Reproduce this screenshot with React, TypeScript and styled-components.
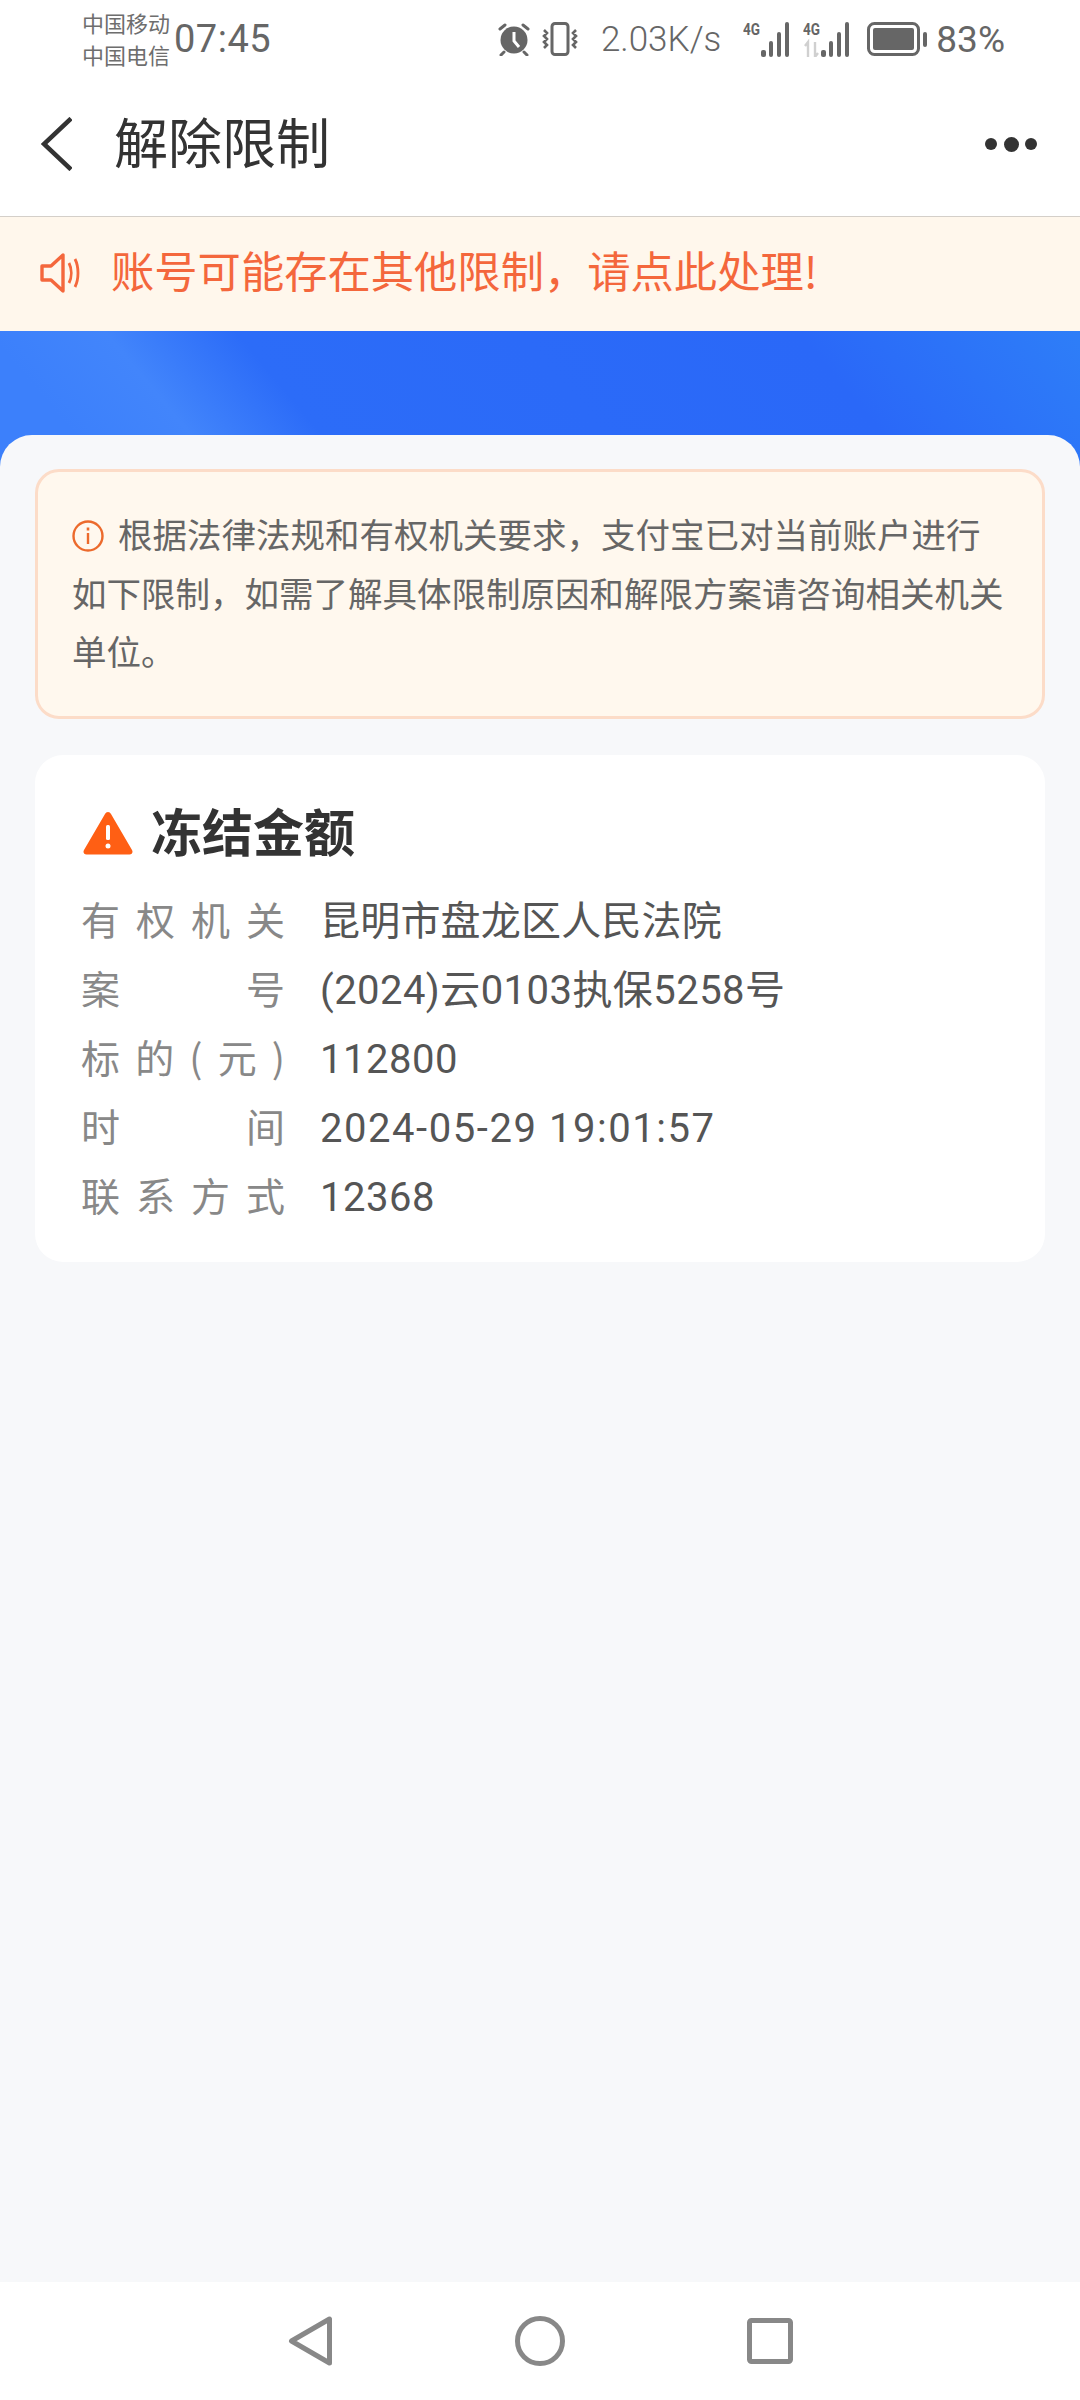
import React from 'react';
import styled, { createGlobalStyle } from 'styled-components';

const CJK = '"Noto Sans CJK SC", "Noto Sans", sans-serif';
const NUM = 'Roboto, "Noto Sans CJK SC", sans-serif';

const GlobalStyle = createGlobalStyle`
  html, body {
    margin: 0;
    padding: 0;
    background: #f7f8fa;
    font-family: ${CJK};
  }
  * {
    box-sizing: border-box;
  }
`;

const Page = styled.div`
  width: 1080px;
  height: 2400px;
  display: flex;
  flex-direction: column;
  overflow: hidden;
`;

const StatusBar = styled.div`
  height: 72px;
  padding: 6px 75px 0 82px;
  display: flex;
  align-items: center;
  background: #fff;
  color: #666;
`;

const Carriers = styled.div`
  width: 92px;
  margin-top: -2px;
  font-size: 22px;
  line-height: 32px;
  color: #6e6e6e;
`;

const Clock = styled.span`
  font-family: ${NUM};
  font-size: 38px;
  letter-spacing: 0.5px;
`;

const StatusRight = styled.div`
  margin-left: auto;
  display: flex;
  align-items: center;
`;

const Speed = styled.span`
  font-family: ${NUM};
  font-weight: 300;
  font-size: 35px;
  margin: 0 22px;
`;

const Percent = styled.span`
  font-family: ${NUM};
  font-weight: 400;
  font-size: 37px;
  margin-left: 9px;
`;

const Header = styled.header`
  height: 145px;
  padding: 0 40px 0 41px;
  display: flex;
  align-items: center;
  background: #fff;
  border-bottom: 1px solid #d4cfc9;
`;

const Title = styled.h1`
  margin: 0 0 6px 42px;
  font-size: 54px;
  font-weight: 400;
  color: #333;
  line-height: 1;
`;

const MoreDots = styled.div`
  margin-left: auto;
  margin-right: 3px;
  display: flex;
  align-items: center;
  gap: 6.5px;
`;

const Dot = styled.span<{ $size: number }>`
  width: ${(p) => p.$size}px;
  height: ${(p) => p.$size}px;
  border-radius: 50%;
  background: #333;
`;

const Notice = styled.div`
  height: 114px;
  padding: 0 0 2px 40px;
  display: flex;
  align-items: center;
  background: #fff7ec;
`;

const NoticeText = styled.span`
  margin: 0 0 6px 28px;
  font-size: 43.3px;
  color: #f4673c;
  line-height: 1;
`;

const Hero = styled.div`
  height: 140px;
  flex-shrink: 0;
  background: linear-gradient(50deg, #3c80fb 80px, #4285fb 170px, #2c6cf8 270px, #2a68f8 700px, #2e7ef8 917px);
`;

const Content = styled.main`
  flex: 1;
  position: relative;
  margin-top: -36px;
  padding: 34px 35px 0;
  border-radius: 32px 32px 0 0;
  background: #f7f8fa;
  display: flex;
  flex-direction: column;
  gap: 36px;
`;

const Alert = styled.div`
  height: 250px;
  padding: 32px 34px 0;
  background: #fff8ee;
  border: 3px solid #fcdcc8;
  border-radius: 24px;
  font-size: 34.5px;
  line-height: 58.5px;
  color: #666;
`;

const InfoIcon = styled.svg`
  width: 32px;
  height: 32px;
  vertical-align: -4px;
  margin-right: 14px;
`;

const Card = styled.section`
  height: 507px;
  padding: 47px 48px 0 46px;
  background: #fff;
  border-radius: 28px;
`;

const CardHead = styled.div`
  display: flex;
  align-items: center;
  height: 62px;
  margin-bottom: 20px;
  padding-left: 2px;
`;

const CardTitle = styled.h2`
  margin: 0 0 5px 18px;
  font-size: 51px;
  font-weight: 700;
  color: #333;
  line-height: 1;
`;

const Row = styled.div`
  height: 69px;
  display: flex;
  align-items: baseline;
  line-height: 69px;
`;

const Label = styled.div`
  width: 204px;
  display: flex;
  justify-content: space-between;
  font-size: 39px;
  color: #888;
`;

const Value = styled.div<{ $tracking: number }>`
  margin-left: 35px;
  font-family: ${NUM};
  font-size: 40px;
  letter-spacing: ${(p) => p.$tracking}px;
  color: #555;
`;

const NavBar = styled.nav`
  height: 118px;
  flex-shrink: 0;
  padding-left: 1px;
  background: #fff;
  display: flex;
  align-items: center;
  justify-content: center;
  gap: 182px;
`;

const rows = [
  { label: '有权机关', value: '昆明市盘龙区人民法院', tracking: 0.2 },
  { label: '案号', value: '(2024)云0103执保5258号', tracking: 0.45 },
  { label: '标的(元)', value: '112800', tracking: 0.5 },
  { label: '时间', value: '2024-05-29 19:01:57', tracking: 1.55 },
  { label: '联系方式', value: '12368', tracking: 0.5 },
];

const Alarm = () => (
  <svg width="34" height="34" viewBox="0 0 34 34" style={{ marginRight: 10 }}>
    <circle cx="17" cy="18" r="13.5" fill="#666" />
    <path d="M17 10v9l5 6" fill="none" stroke="#fff" strokeWidth="3" />
    <path d="M3 7l5-4M31 7l-5-4M7 30l-3 3M27 30l3 3" stroke="#666" strokeWidth="3" strokeLinecap="round" />
  </svg>
);

const Vibrate = () => (
  <svg width="38" height="34" viewBox="0 0 38 34" fill="none" stroke="#666">
    <rect x="11" y="1.5" width="16" height="31" rx="3" strokeWidth="3" />
    <path d="M3 8l3 3-3 3 3 3-3 3 3 3-3 3M35 8l-3 3 3 3-3 3 3 3-3 3 3 3" strokeWidth="2.6" />
  </svg>
);

const Signal = ({ arrows }: { arrows?: boolean }) => (
  <svg width="52" height="36" viewBox="0 0 52 36">
    <text
      x="0"
      y="14"
      fontFamily="Roboto, sans-serif"
      fontWeight="700"
      fontSize="16"
      fill="#666"
      textLength="17"
      lengthAdjust="spacingAndGlyphs"
    >
      4G
    </text>
    {arrows && <path d="M5 36V21l-3 4M12 21v15l3-4" fill="none" stroke="#d0d0d0" strokeWidth="2.4" />}
    <rect x="18" y="29" width="5" height="7" rx="2" fill="#666" />
    <rect x="26" y="20" width="4" height="16" rx="2" fill="#666" />
    <rect x="34" y="11" width="4" height="25" rx="2" fill="#666" />
    <rect x="42" y="1" width="4" height="35" rx="2" fill="#666" />
  </svg>
);

const Battery = () => (
  <svg width="60" height="34" viewBox="0 0 60 34" style={{ marginLeft: 12 }}>
    <rect x="1.5" y="1.5" width="50" height="31" rx="6" fill="none" stroke="#666" strokeWidth="3" />
    <rect x="6" y="6" width="41" height="22" rx="2" fill="#666" />
    <rect x="56" y="10" width="4" height="15" rx="2" fill="#666" />
  </svg>
);

const App = () => (
  <Page>
    <GlobalStyle />
    <StatusBar>
      <Carriers>
        中国移动
        <br />
        中国电信
      </Carriers>
      <Clock>07:45</Clock>
      <StatusRight>
        <Alarm />
        <Vibrate />
        <Speed>2.03K/s</Speed>
        <Signal />
        <span style={{ width: 8 }} />
        <Signal arrows />
        <Battery />
        <Percent>83%</Percent>
      </StatusRight>
    </StatusBar>
    <Header>
      <svg width="31" height="54" viewBox="0 0 31 54" fill="none" stroke="#333" strokeWidth="4.5">
        <path d="M30 1.5L3 27l27 25.5" />
      </svg>
      <Title>解除限制</Title>
      <MoreDots>
        <Dot $size={12} />
        <Dot $size={15} />
        <Dot $size={12} />
      </MoreDots>
    </Header>
    <Notice>
      <svg width="43" height="40" viewBox="0 0 43 40" fill="none" stroke="#f4673c" strokeWidth="3.4">
        <path d="M2 13h9L23 2v36L11 27H2z" strokeLinejoin="round" />
        <path d="M29 10c3 6 3 14 0 20M35 6c4 8 4 20 0 28" strokeWidth="2.8" />
      </svg>
      <NoticeText>账号可能存在其他限制，请点此处理!</NoticeText>
    </Notice>
    <Hero />
    <Content>
      <Alert>
        <InfoIcon viewBox="0 0 32 32" fill="none" stroke="#ec6a2c">
          <circle cx="16" cy="16" r="14.5" strokeWidth="2.4" />
          <path d="M16 13v11" strokeWidth="2.4" />
          <path d="M16 7.5v3" strokeWidth="2.6" />
        </InfoIcon>
        根据法律法规和有权机关要求，支付宝已对当前账户进行如下限制，如需了解具体限制原因和解限方案请咨询相关机关单位。
      </Alert>
      <Card>
        <CardHead>
          <svg width="50" height="44" viewBox="0 0 50 44">
            <path
              d="M25 1c1.4 0 2.3.8 3 2l21 36c1.300 2.300 0 4.500-2.500 4.500h-43C1 43.500-.3 41.300 1 39L22 3c.7-1.200 1.600-2 3-2z"
              fill="#ff5f14"
            />
            <rect x="23" y="14" width="4" height="15" rx="1.500" fill="#fff" />
            <circle cx="25" cy="35" r="2.500" fill="#fff" />
          </svg>
          <CardTitle>冻结金额</CardTitle>
        </CardHead>
        {rows.map((row) => (
          <Row key={row.label}>
            <Label>
              {[...row.label].map((ch, i) => (
                <span key={i}>{ch}</span>
              ))}
            </Label>
            <Value $tracking={row.tracking}>{row.value}</Value>
          </Row>
        ))}
      </Card>
    </Content>
    <NavBar>
      <svg width="45" height="50" viewBox="0 0 44 50" fill="none" stroke="#888" strokeWidth="5" strokeLinejoin="round">
        <path d="M41 3v44L3 25z" />
      </svg>
      <svg width="50" height="50" viewBox="0 0 50 50" fill="none" stroke="#888" strokeWidth="5">
        <circle cx="25" cy="25" r="22.500" />
      </svg>
      <svg width="46" height="46" viewBox="0 0 46 46" fill="none" stroke="#888" strokeWidth="5">
        <rect x="2.500" y="2.500" width="41" height="41" rx="2" />
      </svg>
    </NavBar>
  </Page>
);

export default App;
